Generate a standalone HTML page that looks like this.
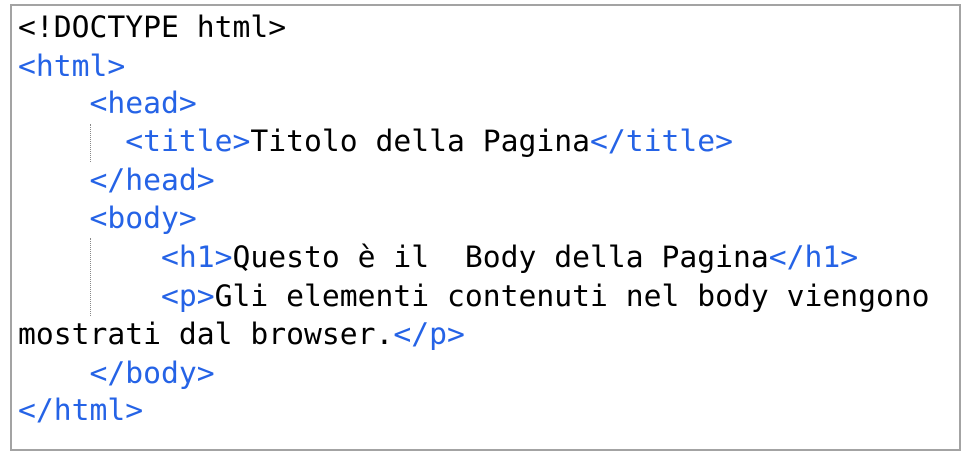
<!DOCTYPE html>
<html><head><style>
body{margin:0;width:969px;height:461px;background:#fff;overflow:hidden}
.box{position:absolute;left:10px;top:4px;width:951px;height:447px;border:2px solid #a3a3a3;box-sizing:border-box}
.l{position:absolute;left:18px;font-family:"DejaVu Sans Mono","Liberation Mono",monospace;font-size:29.7px;white-space:pre;color:#000;line-height:38px}
.b{color:#2563e6}
.d{position:absolute;left:90px;border-left:1px dotted #888;width:0}
</style></head><body>
<div class="box"></div>
<div class="d" style="top:124px;height:38px"></div>
<div class="d" style="top:238px;height:78px"></div>
<div class="l" style="top:9px">&lt;!DOCTYPE html&gt;</div>
<div class="l b" style="top:48px">&lt;html&gt;</div>
<div class="l" style="top:85px">    <span class="b">&lt;head&gt;</span></div>
<div class="l" style="top:123px">      <span class="b">&lt;title&gt;</span>Titolo della Pagina<span class="b">&lt;/title&gt;</span></div>
<div class="l" style="top:162px">    <span class="b">&lt;/head&gt;</span></div>
<div class="l" style="top:200px">    <span class="b">&lt;body&gt;</span></div>
<div class="l" style="top:239px">        <span class="b">&lt;h1&gt;</span>Questo è il  Body della Pagina<span class="b">&lt;/h1&gt;</span></div>
<div class="l" style="top:278px">        <span class="b">&lt;p&gt;</span>Gli elementi contenuti nel body viengono</div>
<div class="l" style="top:316px">mostrati dal browser.<span class="b">&lt;/p&gt;</span></div>
<div class="l" style="top:355px">    <span class="b">&lt;/body&gt;</span></div>
<div class="l b" style="top:392px">&lt;/html&gt;</div>
</body></html>
